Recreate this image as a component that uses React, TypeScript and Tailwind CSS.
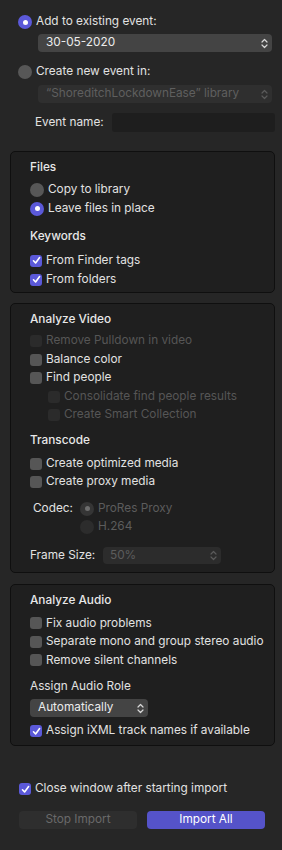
import React from "react";

const font = { fontFamily: "Inter, 'Liberation Sans', sans-serif" };

function Chevrons({ dim }: { dim?: boolean }) {
  return (
    <svg width="7" height="11" viewBox="0 0 7 11" className="shrink-0">
      <path
        d="M1 4 L3.5 1.5 L6 4 M1 7 L3.5 9.5 L6 7"
        fill="none"
        stroke={dim ? "#5a5a5a" : "#d8d8d8"}
        strokeWidth="1.2"
        strokeLinecap="round"
        strokeLinejoin="round"
      />
    </svg>
  );
}

function Radio({ on, disabled }: { on?: boolean; disabled?: boolean }) {
  if (on && !disabled)
    return (
      <span className="w-[14px] h-[14px] rounded-full bg-[#5b59d9] flex items-center justify-center shrink-0">
        <span className="w-[5px] h-[5px] rounded-full bg-white" />
      </span>
    );
  if (on && disabled)
    return (
      <span className="w-[14px] h-[14px] rounded-full bg-[#353535] flex items-center justify-center shrink-0">
        <span className="w-[5px] h-[5px] rounded-full bg-[#6e6e6e]" />
      </span>
    );
  return (
    <span
      className={
        disabled
          ? "w-[14px] h-[14px] rounded-full bg-[#2c2c2c] shrink-0"
          : "w-[14px] h-[14px] rounded-full bg-[#575757] shrink-0"
      }
    />
  );
}

function Check({ on, disabled }: { on?: boolean; disabled?: boolean }) {
  if (on)
    return (
      <span className="w-[12px] h-[12px] rounded-[3px] bg-[#5b59d9] flex items-center justify-center shrink-0">
        <svg width="9" height="9" viewBox="0 0 9 9">
          <path d="M1.5 4.8 L3.6 7 L7.6 1.6" fill="none" stroke="#fff" strokeWidth="1.6" strokeLinecap="round" strokeLinejoin="round" />
        </svg>
      </span>
    );
  return (
    <span
      className={
        disabled
          ? "w-[12px] h-[12px] rounded-[3px] bg-[#2b2b2b] shrink-0"
          : "w-[12px] h-[12px] rounded-[3px] bg-[#565656] shrink-0"
      }
    />
  );
}

function CheckRow({ label, on, disabled, indent }: { label: string; on?: boolean; disabled?: boolean; indent?: boolean }) {
  return (
    <div className={"h-[18.5px] flex items-center gap-[4px] " + (indent ? "pl-[18px]" : "")}>
      <Check on={on} disabled={disabled} />
      <span className={disabled ? "text-[#565656]" : "text-[#e2e2e2]"}>{label}</span>
    </div>
  );
}

function Title({ children }: { children: React.ReactNode }) {
  return <div className="h-[18px] flex items-center font-medium text-[#e8e8e8]">{children}</div>;
}

export default function App() {
  return (
    <div style={font} className="w-[282px] h-[850px] bg-[#262626] text-[11.8px] text-[#e2e2e2] overflow-hidden">
      {/* event */}
      <div className="pl-[18px] pr-[7px] pt-[13px]">
        <div className="h-[18px] flex items-center gap-[4px]">
          <Radio on />
          <span>Add to existing event:</span>
        </div>
        <div className="mt-[3px] ml-[20px] mr-[3px] h-[18px] rounded-[4px] bg-[#444444] flex items-center justify-between pl-[8px] pr-[4px]">
          <span className="text-[#ececec]">30-05-2020</span>
          <Chevrons />
        </div>
        <div className="mt-[11px] h-[18px] flex items-center gap-[4px]">
          <Radio />
          <span>Create new event in:</span>
        </div>
        <div className="mt-[4px] ml-[20px] mr-[3px] h-[18px] rounded-[4px] bg-[#2f2f2f] flex items-center justify-between pl-[8px] pr-[4px]">
          <span className="text-[#5f5f5f]">“ShoreditchLockdownEase” library</span>
          <Chevrons dim />
        </div>
        <div className="mt-[10px] h-[19px] flex items-center">
          <span className="ml-[17px] w-[77px]">Event name:</span>
          <div className="flex-1 h-[19px] rounded-[3px] bg-[#1e1e1e]" />
        </div>
      </div>

      {/* files */}
      <div className="mt-[19px] mx-[10px] mr-[7px] rounded-[5px] border border-[#0f0f0f] bg-[#1f1f1f] pl-[19px] pt-[7px] pb-[3px]">
        <Title>Files</Title>
        <div className="mt-[3px] h-[19px] flex items-center gap-[4px]">
          <Radio />
          <span>Copy to library</span>
        </div>
        <div className="h-[19px] flex items-center gap-[4px]">
          <Radio on />
          <span>Leave files in place</span>
        </div>
        <div className="mt-[10px]">
          <Title>Keywords</Title>
        </div>
        <div className="mt-[5px]">
          <div className="h-[19px] flex items-center gap-[4px]">
            <Check on />
            <span>From Finder tags</span>
          </div>
          <div className="h-[19px] flex items-center gap-[4px]">
            <Check on />
            <span>From folders</span>
          </div>
        </div>
      </div>

      {/* video */}
      <div className="mt-[10px] mx-[10px] mr-[7px] rounded-[5px] border border-[#0f0f0f] bg-[#1f1f1f] pl-[19px] pt-[7px] pb-[8px]">
        <Title>Analyze Video</Title>
        <div className="mt-[3px]">
          <CheckRow label="Remove Pulldown in video" disabled />
          <CheckRow label="Balance color" />
          <CheckRow label="Find people" />
          <CheckRow label="Consolidate find people results" disabled indent />
          <CheckRow label="Create Smart Collection" disabled indent />
        </div>
        <div className="mt-[7px]">
          <Title>Transcode</Title>
        </div>
        <div className="mt-[5px]">
          <CheckRow label="Create optimized media" />
          <CheckRow label="Create proxy media" />
        </div>
        <div className="mt-[8px] flex">
          <span className="w-[50px] pl-[3px] h-[18px] flex items-center">Codec:</span>
          <div>
            <div className="h-[18px] flex items-center gap-[4px]">
              <Radio on disabled />
              <span className="text-[#5c5c5c]">ProRes Proxy</span>
            </div>
            <div className="h-[18px] flex items-center gap-[4px]">
              <Radio disabled />
              <span className="text-[#5c5c5c]">H.264</span>
            </div>
          </div>
        </div>
        <div className="mt-[11px] flex items-center">
          <span className="w-[73px]">Frame Size:</span>
          <div className="w-[118px] h-[17px] rounded-[4px] bg-[#2c2c2c] flex items-center justify-between pl-[7px] pr-[4px]">
            <span className="text-[#5c5c5c]">50%</span>
            <Chevrons dim />
          </div>
        </div>
      </div>

      {/* audio */}
      <div className="mt-[11px] mx-[10px] mr-[7px] rounded-[5px] border border-[#0f0f0f] bg-[#1f1f1f] pl-[19px] pt-[7px] pb-[5px]">
        <Title>Analyze Audio</Title>
        <div className="mt-[4px]">
          <CheckRow label="Fix audio problems" />
          <CheckRow label="Separate mono and group stereo audio" />
          <CheckRow label="Remove silent channels" />
        </div>
        <div className="mt-[8.5px] h-[18px] flex items-center">Assign Audio Role</div>
        <div className="mt-[3px] w-[118px] h-[18px] rounded-[4px] bg-[#444444] flex items-center justify-between pl-[8px] pr-[4px]">
          <span className="text-[#ececec]">Automatically</span>
          <Chevrons />
        </div>
        <div className="mt-[5px] h-[18px] flex items-center gap-[4px]">
          <Check on />
          <span>Assign iXML track names if available</span>
        </div>
      </div>

      {/* footer */}
      <div className="pl-[19px] pr-[17px]">
        <div className="mt-[34px] h-[18px] flex items-center gap-[4px]">
          <Check on />
          <span>Close window after starting import</span>
        </div>
        <div className="mt-[13px] flex gap-[10px]">
          <div className="w-[118px] h-[18px] rounded-[4px] bg-[#2e2e2e] flex items-center justify-center text-[#6a6a6a]">
            Stop Import
          </div>
          <div className="w-[118px] h-[18px] rounded-[4px] bg-[#5553c9] flex items-center justify-center text-white">
            Import All
          </div>
        </div>
      </div>
    </div>
  );
}
